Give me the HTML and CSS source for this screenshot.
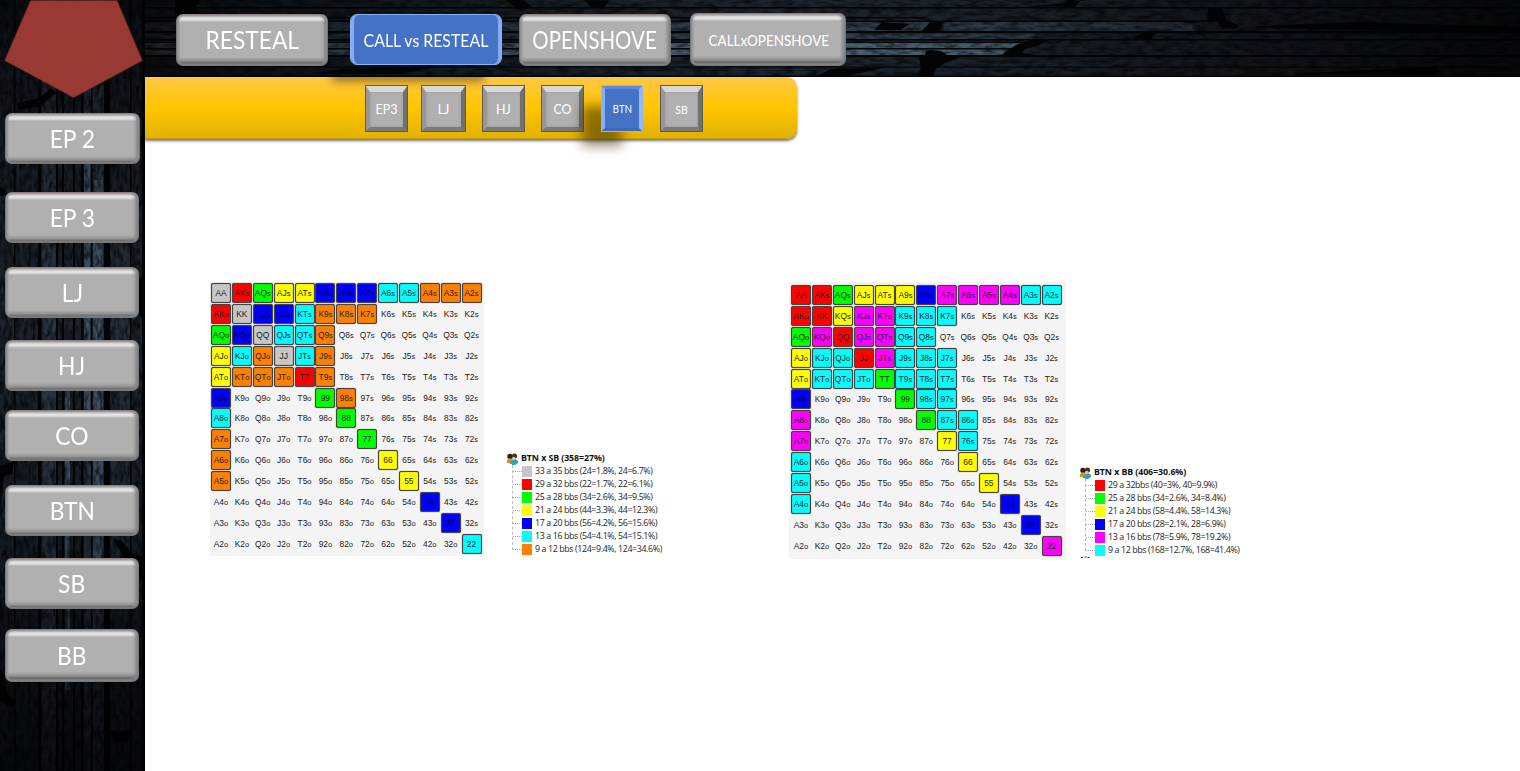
FILE: index.html
```html
<!DOCTYPE html>
<html lang="en">
<head>
<meta charset="utf-8">
<title>BTN ranges</title>
<link rel="stylesheet" href="styles.css">
</head>
<body>
<div class="app">
  <aside class="side">
    <svg class="wood" viewBox="0 0 145 771" preserveAspectRatio="none">
      <defs>
        <filter id="grainV" x="0" y="0" width="100%" height="100%">
          <feTurbulence type="fractalNoise" baseFrequency="0.25 0.1" numOctaves="4" seed="8"/>
          <feColorMatrix values="0 0 0 0 0  0 0 0 0 0  0 0 0 0 0  1.5 0 0 0 -0.5"/>
        </filter>
        <linearGradient id="shadeV" x1="0" y1="0" x2="0" y2="1">
          <stop offset="0" stop-color="#000" stop-opacity=".65"/>
          <stop offset=".2" stop-color="#000" stop-opacity=".25"/>
          <stop offset=".4" stop-color="#000" stop-opacity="0"/>
          <stop offset=".65" stop-color="#000" stop-opacity=".15"/>
          <stop offset=".85" stop-color="#000" stop-opacity=".55"/>
          <stop offset="1" stop-color="#000" stop-opacity=".75"/>
        </linearGradient>
      </defs>
      <rect width="145" height="771" fill="#1c242d"/>
      <path fill="#2b3743" d="M42 0h14v771H42zM84 0h20v771H84z"/>
      <path fill="#40546a" d="M84 150h6v310h-6zM93 180h10v390H93zM65 380h5v310h-5z"/>
      <path fill="#252f39" d="M111 200h19v400h-19z"/>
      <rect width="145" height="771" filter="url(#grainV)"/>
      <path fill="#020406" d="M14 0h1.500v771H14zM38 0h3v771h-3zM56 0h2v771h-2zM62 0h2v771h-2zM73 0h2v771h-2zM81 0h2.500v771H81zM91 0h1.500v771H91zM104 0h6v771h-6zM130 0h1.500v771H130zM142 0h3v771h-3z"/>
      <path fill="#020406" d="M17 103l22-5 12-10 5 5-15 13-23 4zM0 187l5 2 3 6-8 1zM137 280l8-4v42l-6-2zM0 466l14-4-2 12-8 2-4 34zM113 538l10 4 10 12 12 3v32l-9-19-12-12zM0 669l4 5 3 20 10 8-5 6-10-5-2-3zM105 728l12 4 12-2v10l-13 3z"/>
      <rect width="145" height="771" fill="url(#shadeV)"/>
    </svg>
    <svg class="pentagon" viewBox="0 0 145 113"><path fill="#983a33" stroke="#762b27" stroke-width=".7" d="M30.500.7H117L142.300 60.500 73.500 97.500 4.800 60.500z"/></svg>
    <nav class="side-nav">
      <a class="btn wide"><span>EP 2</span></a>
      <a class="btn g28"><span>EP 3</span></a>
      <a class="btn g24"><span>LJ</span></a>
      <a class="btn g22"><span>HJ</span></a>
      <a class="btn g19"><span>CO</span></a>
      <a class="btn g24"><span>BTN</span></a>
      <a class="btn g22"><span>SB</span></a>
      <a class="btn g20 tall"><span>BB</span></a>
    </nav>
  </aside>
  <div class="main">
    <header class="top">
      <svg class="wood" viewBox="0 0 1375 77" preserveAspectRatio="none">
        <defs>
          <filter id="grainH" x="0" y="0" width="100%" height="100%">
            <feTurbulence type="fractalNoise" baseFrequency="0.08 0.25" numOctaves="4" seed="5"/>
            <feColorMatrix values="0 0 0 0 0  0 0 0 0 0  0 0 0 0 0  1.4 0 0 0 -0.5"/>
          </filter>
          <linearGradient id="shadeH">
            <stop offset="0" stop-color="#000" stop-opacity=".65"/>
            <stop offset=".15" stop-color="#000" stop-opacity=".4"/>
            <stop offset=".45" stop-color="#000" stop-opacity="0"/>
            <stop offset=".58" stop-color="#000" stop-opacity=".05"/>
            <stop offset=".8" stop-color="#000" stop-opacity=".4"/>
            <stop offset="1" stop-color="#000" stop-opacity=".8"/>
          </linearGradient>
        </defs>
        <rect width="1375" height="77" fill="#1c242c"/>
        <path fill="#303d49" d="M0 22h795l-6 10H0zM0 33h890v7H0zM800 22h245l5 9H798z"/>
        <path fill="#4b6070" d="M0 43h885l-18 12H0z"/>
        <path fill="#1c242c" d="M900 41h475v15H880zM1078 9h297v22h-285z"/>
        <rect width="1375" height="77" filter="url(#grainH)"/>
        <path fill="#020406" d="M0 7h1375v1.500H0zM0 17h780v1.500H0zM0 20.500h1070v1.500H0zM0 31h1375v2.200H0zM0 39h1375v1.500H0zM0 42h890v1H0zM0 48h870v1.500H0zM0 55h1375v2H0zM0 66.500h1375v1H0zM0 75.500h1375v1.500H0z"/>
        <path fill="#020406" d="M30 0h25l-5 7 6 8-14 5-12-5zM360 0h18l10 7-14 3zM440 0l24 1-5 6h-14zM880 7l40-4 20-3h-8l-12 6zM922 0h14l-6 7h-12zM785 22h14l-6 11h-18zM765 24l-10 6h-26l8-8zM1063 8h14l4 12 13 6-4 3-13-1-5-7h-10zM890 39h16l-14 7-12 3-3 4 12 2-13 1h-20l4-4 13-8zM780 56l1-5 4-1 11 1 8 5 12 1-15 5-10 7-3 8h-17l5-9-2-11zM988 39l9-6h15l-6 6zM1100 27l110-5 165 5v4h-120zM1277 67h15l4 5-9 3-140-1zM742 67l-40 9h-30l14-7zM290 67l-33 7h-90l30-5z"/>
        <rect width="1375" height="77" fill="url(#shadeH)"/>
      </svg>
      <nav class="tabs">
        <a class="btn"><span>RESTEAL</span></a>
        <a class="btn active"><span>CALL vs RESTEAL</span></a>
        <a class="btn shove"><span>OPENSHOVE</span></a>
        <a class="btn callx"><span>CALLxOPENSHOVE</span></a>
      </nav>
    </header>
    <nav class="bar">
      <div class="tab-shade"></div>
      <a class="key">EP3</a>
      <a class="key lj">LJ</a>
      <a class="key hj">HJ</a>
      <a class="key co">CO</a>
      <div class="shade-box"><div class="key-shade"></div><a class="key on"><span>BTN</span></a></div>
      <a class="key sb">SB</a>
    </nav>
    <main class="content">
      <section class="range range-sb">
        <div class="grid" data-colors="srgyybbbccooo rsbbcooo..... gbscco....... ycosco....... yoooro....... b....go...... c.....g...... o......g..... o.......y.... o........y... ..........b.. ...........b. ............c"></div>
        <div class="legend">
          <h2><svg class="people" viewBox="0 0 12 12"><circle cx="4" cy="3.500" r="2.700" fill="#2b2118"/><circle cx="8.500" cy="3" r="2.600" fill="#4a321b"/><path d="M1 7l3-2 3 2v3H1z" fill="#dc8c2e"/><path d="M5 8l3-3 4 3v2l-3 2H6z" fill="#2f9fc0"/><circle cx="7.800" cy="5.500" r="1.700" fill="#f2bd80"/><path d="M3 9l3 0 1 2-3 0z" fill="#59a947"/></svg>BTN x SB (358=27%)</h2>
          <ul>
            <li><i class="s"></i><span>33 a 35 bbs (24=1.8%, 24=6.7%)</span></li>
            <li><i class="r"></i><span>29 a 32 bbs (22=1.7%, 22=6.1%)</span></li>
            <li><i class="g"></i><span>25 a 28 bbs (34=2.6%, 34=9.5%)</span></li>
            <li><i class="y"></i><span>21 a 24 bbs (44=3.3%, 44=12.3%)</span></li>
            <li><i class="b"></i><span>17 a 20 bbs (56=4.2%, 56=15.6%)</span></li>
            <li><i class="c"></i><span>13 a 16 bbs (54=4.1%, 54=15.1%)</span></li>
            <li><i class="o"></i><span>9 a 12 bbs (124=9.4%, 124=34.6%)</span></li>
          </ul>
        </div>
      </section>
      <section class="range range-bb">
        <div class="grid" data-colors="rrgyyybmmmmcc rrymmccc..... gmrmmcc...... yccrmccc..... ycccgccc..... b....gcc..... m.....gcc.... m......yc.... c.......y.... c........y... c.........b.. ...........b. ............m"></div>
        <div class="legend">
          <h2><svg class="people" viewBox="0 0 12 12"><circle cx="4" cy="3.500" r="2.700" fill="#2b2118"/><circle cx="8.500" cy="3" r="2.600" fill="#4a321b"/><path d="M1 7l3-2 3 2v3H1z" fill="#dc8c2e"/><path d="M5 8l3-3 4 3v2l-3 2H6z" fill="#2f9fc0"/><circle cx="7.800" cy="5.500" r="1.700" fill="#f2bd80"/><path d="M3 9l3 0 1 2-3 0z" fill="#59a947"/></svg>BTN x BB (406=30.6%)</h2>
          <ul>
            <li><i class="r"></i><span>29 a 32bbs (40=3%, 40=9.9%)</span></li>
            <li><i class="g"></i><span>25 a 28 bbs (34=2.6%, 34=8.4%)</span></li>
            <li><i class="y"></i><span>21 a 24 bbs (58=4.4%, 58=14.3%)</span></li>
            <li><i class="b"></i><span>17 a 20 bbs (28=2.1%, 28=6.9%)</span></li>
            <li><i class="m"></i><span>13 a 16 bbs (78=5.9%, 78=19.2%)</span></li>
            <li><i class="c"></i><span>9 a 12 bbs (168=12.7%, 168=41.4%)</span></li>
          </ul>
          <svg class="stub" viewBox="0 0 10 3"><path d="M1 1.500h2M4.500 1h2M7.500 1.500h2" stroke="#333" stroke-width="1"/></svg>
        </div>
      </section>
    </main>
  </div>
</div>
<script src="grid.js"></script>
</body>
</html>
```
FILE: styles.css
```css
* { box-sizing: border-box; }
body { margin: 0; background: #fff; overflow: hidden; font-family: Lato, "Open Sans", sans-serif; }
.app { display: flex; width: 1520px; height: 771px; }
.side { position: relative; width: 145px; height: 771px; flex: none; background: #0b0f13; }
.wood { position: absolute; left: 0; top: 0; width: 100%; height: 100%; display: block; }
.pentagon { position: relative; display: block; width: 145px; height: 113px; }
.side-nav { position: relative; display: flex; flex-direction: column; padding-left: 5px; }

.btn {
  display: flex; align-items: center; justify-content: center; flex: none;
  width: 134px; height: 51px; padding-top: 1px;
  border: 1px solid #777; border-top-color: #8c8080; border-radius: 7px;
  background: linear-gradient(#a3a3a3 0 1px, #cfcfcf 2px, #e6e6e6 4px, #dedede 5px, #b0b0b0 7px, #b0b0b0 42px, #8e8e8e 46px, #686868 48px, #8b8b8b);
  box-shadow: inset 3px 0 2px -1px #909090, inset -4px 0 3px -1px #858585;
  color: #fff; font-size: 24.500px; line-height: 30px; white-space: nowrap;
}
.btn span { transform: scaleX(.93); }
.side-nav .wide { width: 135px; }
.side-nav .tall { height: 53px; }
.g28 { margin-top: 28px; }
.g22 { margin-top: 22px; }
.g19 { margin-top: 19px; }
.g24 { margin-top: 24px; }
.g20 { margin-top: 20px; }

.main { width: 1375px; }
.top { position: relative; height: 77px; background: #0b0f13; }
.tabs { position: relative; display: flex; align-items: flex-start; padding: 14px 0 0 31px; }
.tabs .btn { width: 152px; height: 52px; padding-top: 0; }
.tabs .active {
  height: 51px; padding-top: 3px; margin-left: 22px; font-size: 16.500px; border-color: #8db0ee;
  background: #4472c4; box-shadow: inset 4px 0 1px -1px #85aefa, inset -4px 0 1px -1px #85aefa;
}
.tabs .active span { transform: scaleX(.96); }
.tabs .shove { margin-left: 17px; }
.tabs .shove span { transform: scaleX(.835); }
.tabs .callx { width: 156px; height: 53px; margin: -1px 0 0 19px; padding-top: 3px; font-size: 14.500px; }
.tabs .callx span { transform: translateX(1px) scaleX(.93); }

.bar {
  position: relative; display: flex; align-items: flex-start; width: 652px; height: 62px; padding: 8px 0 0 220px;
  border-radius: 0 10px 10px 0; border-bottom: 1px solid #c89c08;
  background: linear-gradient(#ffc746, #ffc600 50%, #e2b100);
  box-shadow: 0 2px 3px rgba(0,0,0,.55);
}
.tab-shade { position: absolute; left: 187px; top: -8px; width: 152px; height: 13px; background: rgba(70,50,0,.5); filter: blur(4px); clip-path: inset(8px -12px -12px -12px); }
.key-shade { position: absolute; left: -19px; top: 21px; width: 40px; height: 40px; background: rgba(60,45,0,.55); filter: blur(6px); }
.key {
  position: relative; display: flex; flex: none; align-items: center; justify-content: center; width: 43px; height: 47px;
  border: solid; border-width: 7px 5px 5px; border-color: #d9d9d9 #707070 #7b7b7b #979797;
  background: #b0b0b0; box-shadow: inset 0 0 3px #999;
  outline: 1px solid #5f5a50; outline-offset: -1px;
  color: #fff; font-size: 12.500px; line-height: 14px;
}
.lj { width: 45px; margin-left: 13px; }
.hj { margin-left: 16px; }
.co { margin-left: 16px; }
.shade-box { position: relative; margin-left: 17px; }
.on { width: 42px; background: #4472c4; border-width: 4px; border-color: #5b8be0 #94b9ff #3e69b6 #86aefa; outline-color: #8db5ff; box-shadow: none; font-size: 10.500px; }
.on span { transform: scaleX(.92); }
.sb { margin-left: 17px; font-size: 10.500px; }

.content { display: flex; padding: 143px 0 0 65px; align-items: flex-start; }
.range { display: flex; align-items: flex-start; }
.range-sb { width: 579px; }
.grid {
  display: grid; grid-template-columns: repeat(13, 20px); grid-auto-rows: 20px; gap: .88px; flex: none;
  width: 274px; height: 274px; padding: 1.200px 1px; background: #f4f4f4;
  font: 8.400px/18px "Liberation Sans", Arial, sans-serif; color: #222; text-align: center;
}
.range-bb .grid { width: 277px; height: 277px; padding: 3.100px 2px; }
.cell { border: 1px solid transparent; border-radius: 2px; white-space: nowrap; }
.cell small { font-size: 7.500px; }
.cell.s, .cell.r, .cell.g, .cell.y, .cell.b, .cell.c, .cell.o, .cell.m { border-color: #444; box-shadow: 0 0 1px #555, inset 0 0 1px #555; }
.s { background: #c6c6c6; }
.r { background: #f00; }
.g { background: #0f0; }
.y { background: #ff0; }
.b { background: #00f; }
.c { background: #0ff; }
.o { background: #ff8000; }
.m { background: #f0f; }
.cell.b { color: #00003c; }

.legend { color: #1c1c1c; font: 8.800px/13px "Open Sans", "Noto Sans", sans-serif; }
.range-sb .legend { margin: 170px 0 0 22px; }
.range-bb .legend { margin: 184px 0 0 13px; }
.legend h2 { display: flex; align-items: center; margin: 0; height: 13px; font-size: 8.800px; line-height: 13px; letter-spacing: -.07px; color: #111; white-space: nowrap; }
.people { width: 12px; height: 12px; margin-right: 3px; }
.legend ul { list-style: none; margin: 0 0 0 6px; padding: 0; border-left: 1px dashed #bbb; height: 85px; }
.range-bb .legend ul { height: 72px; }
.legend li { display: flex; align-items: center; height: 13px; white-space: nowrap; letter-spacing: -.36px; }
.legend li::before { content: ""; width: 9px; border-top: 1px dotted #aaa; }
.legend i { width: 10px; height: 11px; margin-right: 3px; }
.stub { display: block; width: 10px; height: 3px; margin: 5px 0 0 1px; }
```
FILE: grid.js
```js
const ranks = "AKQJT98765432";

document.querySelectorAll(".grid").forEach((grid) => {
  grid.dataset.colors.split(" ").forEach((row, i) => {
    [...row].forEach((color, j) => {
      const cell = document.createElement("div");
      cell.className = color === "." ? "cell" : "cell " + color;
      cell.textContent = ranks[Math.min(i, j)] + ranks[Math.max(i, j)];
      if (i !== j) {
        const suffix = document.createElement("small");
        suffix.textContent = i < j ? "s" : "o";
        cell.append(suffix);
      }
      grid.append(cell);
    });
  });
});
```
